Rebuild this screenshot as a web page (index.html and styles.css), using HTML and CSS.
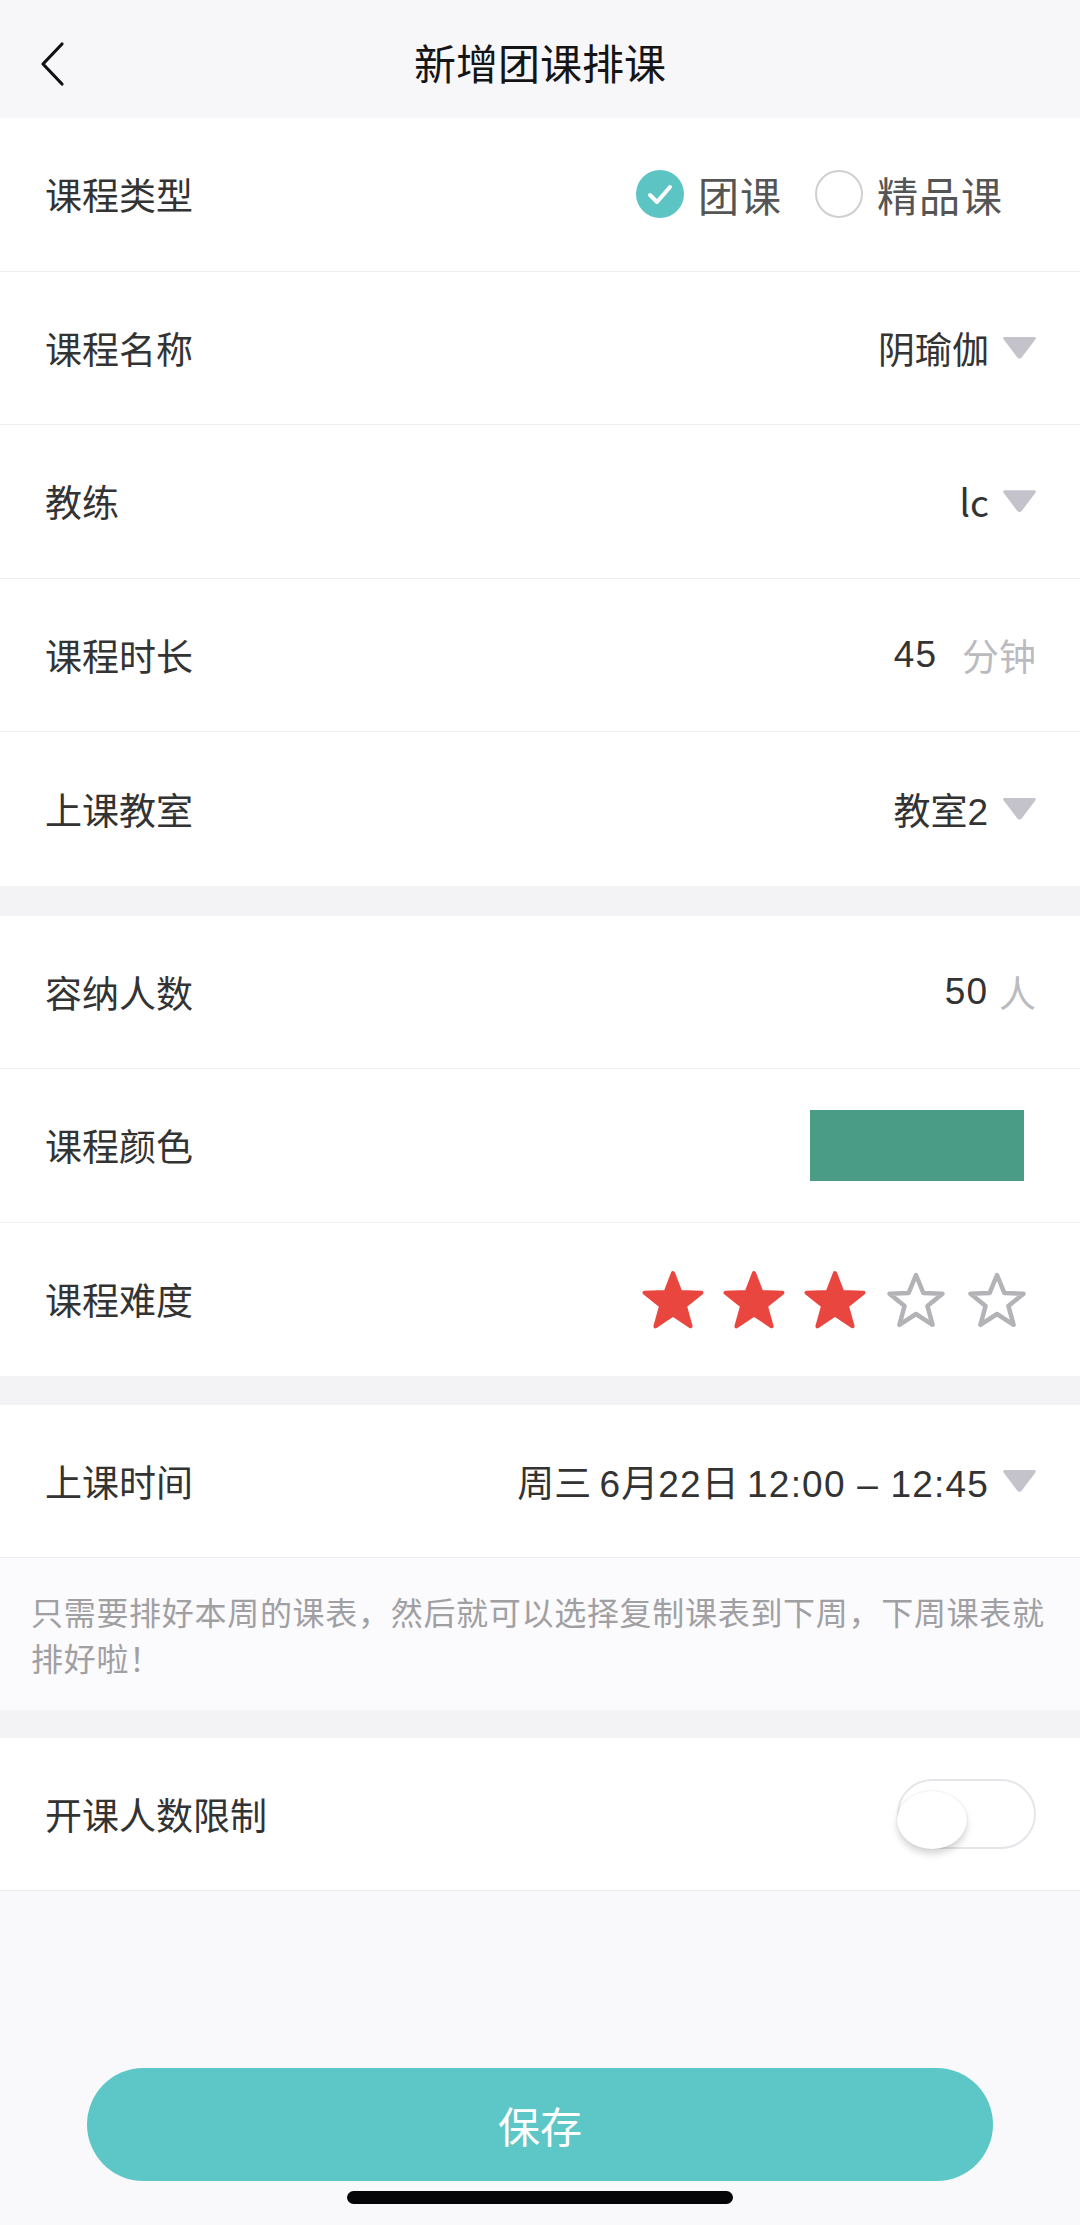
FILE: index.html
```html
<!DOCTYPE html>
<html lang="zh-CN">
<head>
<meta charset="utf-8">
<title>新增团课排课</title>
<link rel="stylesheet" href="styles.css">
</head>
<body>
<div class="page">
  <header class="header">
    <svg class="back" width="30" height="46" viewBox="0 0 30 46"><polyline points="24,3 5,23 24,43" fill="none" stroke="#111" stroke-width="3.2" stroke-linecap="round" stroke-linejoin="round"/></svg>
    <h1 class="title">新增团课排课</h1>
  </header>

  <section class="group">
    <div class="row">
      <span class="label">课程类型</span>
      <div class="radios">
        <span class="radio radio-on"><svg width="48" height="48" viewBox="0 0 48 48"><circle cx="24" cy="24" r="24" fill="#5cc5c4"/><polyline points="14,25 21,32 34,17" fill="none" stroke="#fff" stroke-width="4" stroke-linecap="round" stroke-linejoin="round"/></svg></span>
        <span class="radio-text">团课</span>
        <span class="radio radio-off"></span>
        <span class="radio-text">精品课</span>
      </div>
    </div>
    <div class="row">
      <span class="label">课程名称</span>
      <div class="value"><span>阴瑜伽</span><span class="caret"></span></div>
    </div>
    <div class="row">
      <span class="label">教练</span>
      <div class="value"><span>lc</span><span class="caret"></span></div>
    </div>
    <div class="row">
      <span class="label">课程时长</span>
      <div class="value"><span class="num">45</span><span class="unit unit-wide">分钟</span></div>
    </div>
    <div class="row">
      <span class="label">上课教室</span>
      <div class="value"><span>教室<span class="num">2</span></span><span class="caret"></span></div>
    </div>
  </section>

  <div class="gap gap-30"></div>

  <section class="group">
    <div class="row">
      <span class="label">容纳人数</span>
      <div class="value"><span class="num">50</span><span class="unit">人</span></div>
    </div>
    <div class="row">
      <span class="label">课程颜色</span>
      <div class="swatch"></div>
    </div>
    <div class="row">
      <span class="label">课程难度</span>
      <div class="stars">
        <svg class="star" width="62" height="60" viewBox="0 0 62 60"><polygon points="31,3 38.3,21.9 59.5,22.7 42.9,35.9 48.6,56.3 31,44.5 13.4,56.3 19.1,35.9 2.5,22.7 23.7,21.9" fill="#e8463f" stroke="#e8463f" stroke-width="4" stroke-linejoin="round"/></svg>
        <svg class="star" width="62" height="60" viewBox="0 0 62 60"><polygon points="31,3 38.3,21.9 59.5,22.7 42.9,35.9 48.6,56.3 31,44.5 13.4,56.3 19.1,35.9 2.5,22.7 23.7,21.9" fill="#e8463f" stroke="#e8463f" stroke-width="4" stroke-linejoin="round"/></svg>
        <svg class="star" width="62" height="60" viewBox="0 0 62 60"><polygon points="31,3 38.3,21.9 59.5,22.7 42.9,35.9 48.6,56.3 31,44.5 13.4,56.3 19.1,35.9 2.5,22.7 23.7,21.9" fill="#e8463f" stroke="#e8463f" stroke-width="4" stroke-linejoin="round"/></svg>
        <svg class="star" width="62" height="60" viewBox="0 0 62 60"><polygon points="31,5 38.3,22.9 57.5,23.7 42.4,35.9 47.6,54.8 31,44 14.4,54.8 19.6,35.9 4.5,23.7 23.7,22.9" fill="none" stroke="#b3b2b7" stroke-width="4.5" stroke-linejoin="round"/></svg>
        <svg class="star" width="62" height="60" viewBox="0 0 62 60"><polygon points="31,5 38.3,22.9 57.5,23.7 42.4,35.9 47.6,54.8 31,44 14.4,54.8 19.6,35.9 4.5,23.7 23.7,22.9" fill="none" stroke="#b3b2b7" stroke-width="4.5" stroke-linejoin="round"/></svg>
      </div>
    </div>
  </section>

  <div class="gap gap-29"></div>

  <section class="group">
    <div class="row row-last">
      <span class="label">上课时间</span>
      <div class="value value-date"><span>周三 <span class="num">6</span>月<span class="num">22</span>日 <span class="num">12:00 – 12:45</span></span><span class="caret"></span></div>
    </div>
  </section>

  <div class="note">只需要排好本周的课表，然后就可以选择复制课表到下周，下周课表就排好啦！</div>

  <div class="gap gap-28"></div>

  <section class="group group-bordered">
    <div class="row row-last">
      <span class="label">开课人数限制</span>
      <div class="toggle"><span class="knob"></span></div>
    </div>
  </section>

  <footer class="footer">
    <button class="save">保存</button>
    <div class="home-bar"></div>
  </footer>
</div>
</body>
</html>
```

FILE: styles.css
```css
* { box-sizing: border-box; }
html, body { margin: 0; padding: 0; }
body {
  background: #f9f8fb;
  font-family: "Noto Sans CJK SC", "Noto Sans", sans-serif;
  color: #333;
}
.page {
  width: 1080px;
  height: 2225px;
  display: flex;
  flex-direction: column;
  overflow: hidden;
}
.header {
  height: 118px;
  flex: none;
  background: #f7f6f9;
  display: flex;
  align-items: center;
  justify-content: center;
  position: relative;
}
.back {
  position: absolute;
  left: 38px;
  top: 41px;
}
.title {
  margin: 0;
  font-size: 42px;
  font-weight: 400;
  color: #151515;
  line-height: 1;
  padding-top: 6px;
}
.group {
  background: #fff;
  flex: none;
}
.row {
  height: 153.5px;
  padding: 0 44px 0 45px;
  display: flex;
  align-items: center;
  justify-content: space-between;
  border-bottom: 1px solid #efeef3;
}
.group > .row:last-child { border-bottom: none; }
.group-bordered { border-bottom: 1px solid #ebeaef; }
.row-last { height: 152px; }
.label {
  font-size: 37px;
  color: #333;
}
.radios {
  display: flex;
  align-items: center;
  padding-right: 33px;
}
.radio {
  width: 48px;
  height: 48px;
  border-radius: 50%;
  display: block;
  flex: none;
}
.radio svg { display: block; }
.radio-off {
  border: 2.5px solid #cfcfd2;
  margin-left: 33px;
}
.radio-text {
  font-size: 41px;
  color: #555;
  margin-left: 14px;
  line-height: 1;
  letter-spacing: 1px;
}
.value {
  display: flex;
  align-items: center;
  font-size: 37px;
  color: #333;
}
.num {
  font-family: "Liberation Sans", "Noto Sans CJK SC", sans-serif;
  letter-spacing: 1px;
}
.value-date .num { letter-spacing: 1.2px; }
.caret {
  width: 33px;
  height: 22px;
  margin-left: 14px;
  background: #c4c3cb;
  clip-path: polygon(3% 0, 97% 0, 100% 8%, 56% 96%, 50% 100%, 44% 96%, 0 8%);
}
.unit {
  color: #bbbbbf;
  margin-left: 11px;
}
.unit-wide { margin-left: 25px; }
.swatch {
  width: 214px;
  height: 71px;
  background: #4b9c86;
  margin-right: 12px;
}
.stars {
  display: flex;
  gap: 19px;
  margin-right: 8px;
  padding-top: 2px;
}
.star { display: block; }
.gap { flex: none; background: #f3f2f5; }
.gap-30 { height: 30px; }
.gap-29 { height: 29px; }
.gap-28 { height: 28px; }
.note {
  flex: none;
  height: 153px;
  padding: 0 31px;
  display: flex;
  align-items: center;
  font-size: 32px;
  line-height: 46px;
  letter-spacing: 0.7px;
  color: #a0a0a3;
  background: #fbfafc;
  border-top: 1px solid #efeef3;
}
.toggle {
  width: 139px;
  height: 70px;
  border: 2px solid #e6e5ea;
  border-radius: 35px;
  background: #fff;
  position: relative;
}
.knob {
  position: absolute;
  left: -2px;
  bottom: -2px;
  width: 70px;
  height: 58px;
  border-radius: 50%;
  background: #fff;
  box-shadow: 0 5px 7px rgba(0,0,0,0.16), 0 0 2px rgba(0,0,0,0.12);
}
.footer {
  margin-top: auto;
  display: flex;
  flex-direction: column;
  align-items: center;
  padding-bottom: 21px;
}
.save {
  width: 906px;
  height: 113px;
  border: none;
  border-radius: 57px;
  background: #5dc7c7;
  color: #fff;
  font-family: "Noto Sans CJK SC", "Noto Sans", sans-serif;
  font-size: 42px;
  margin: 0;
  padding: 0;
}
.home-bar {
  width: 386px;
  height: 13px;
  border-radius: 7px;
  background: #060608;
  margin-top: 10px;
}
```
